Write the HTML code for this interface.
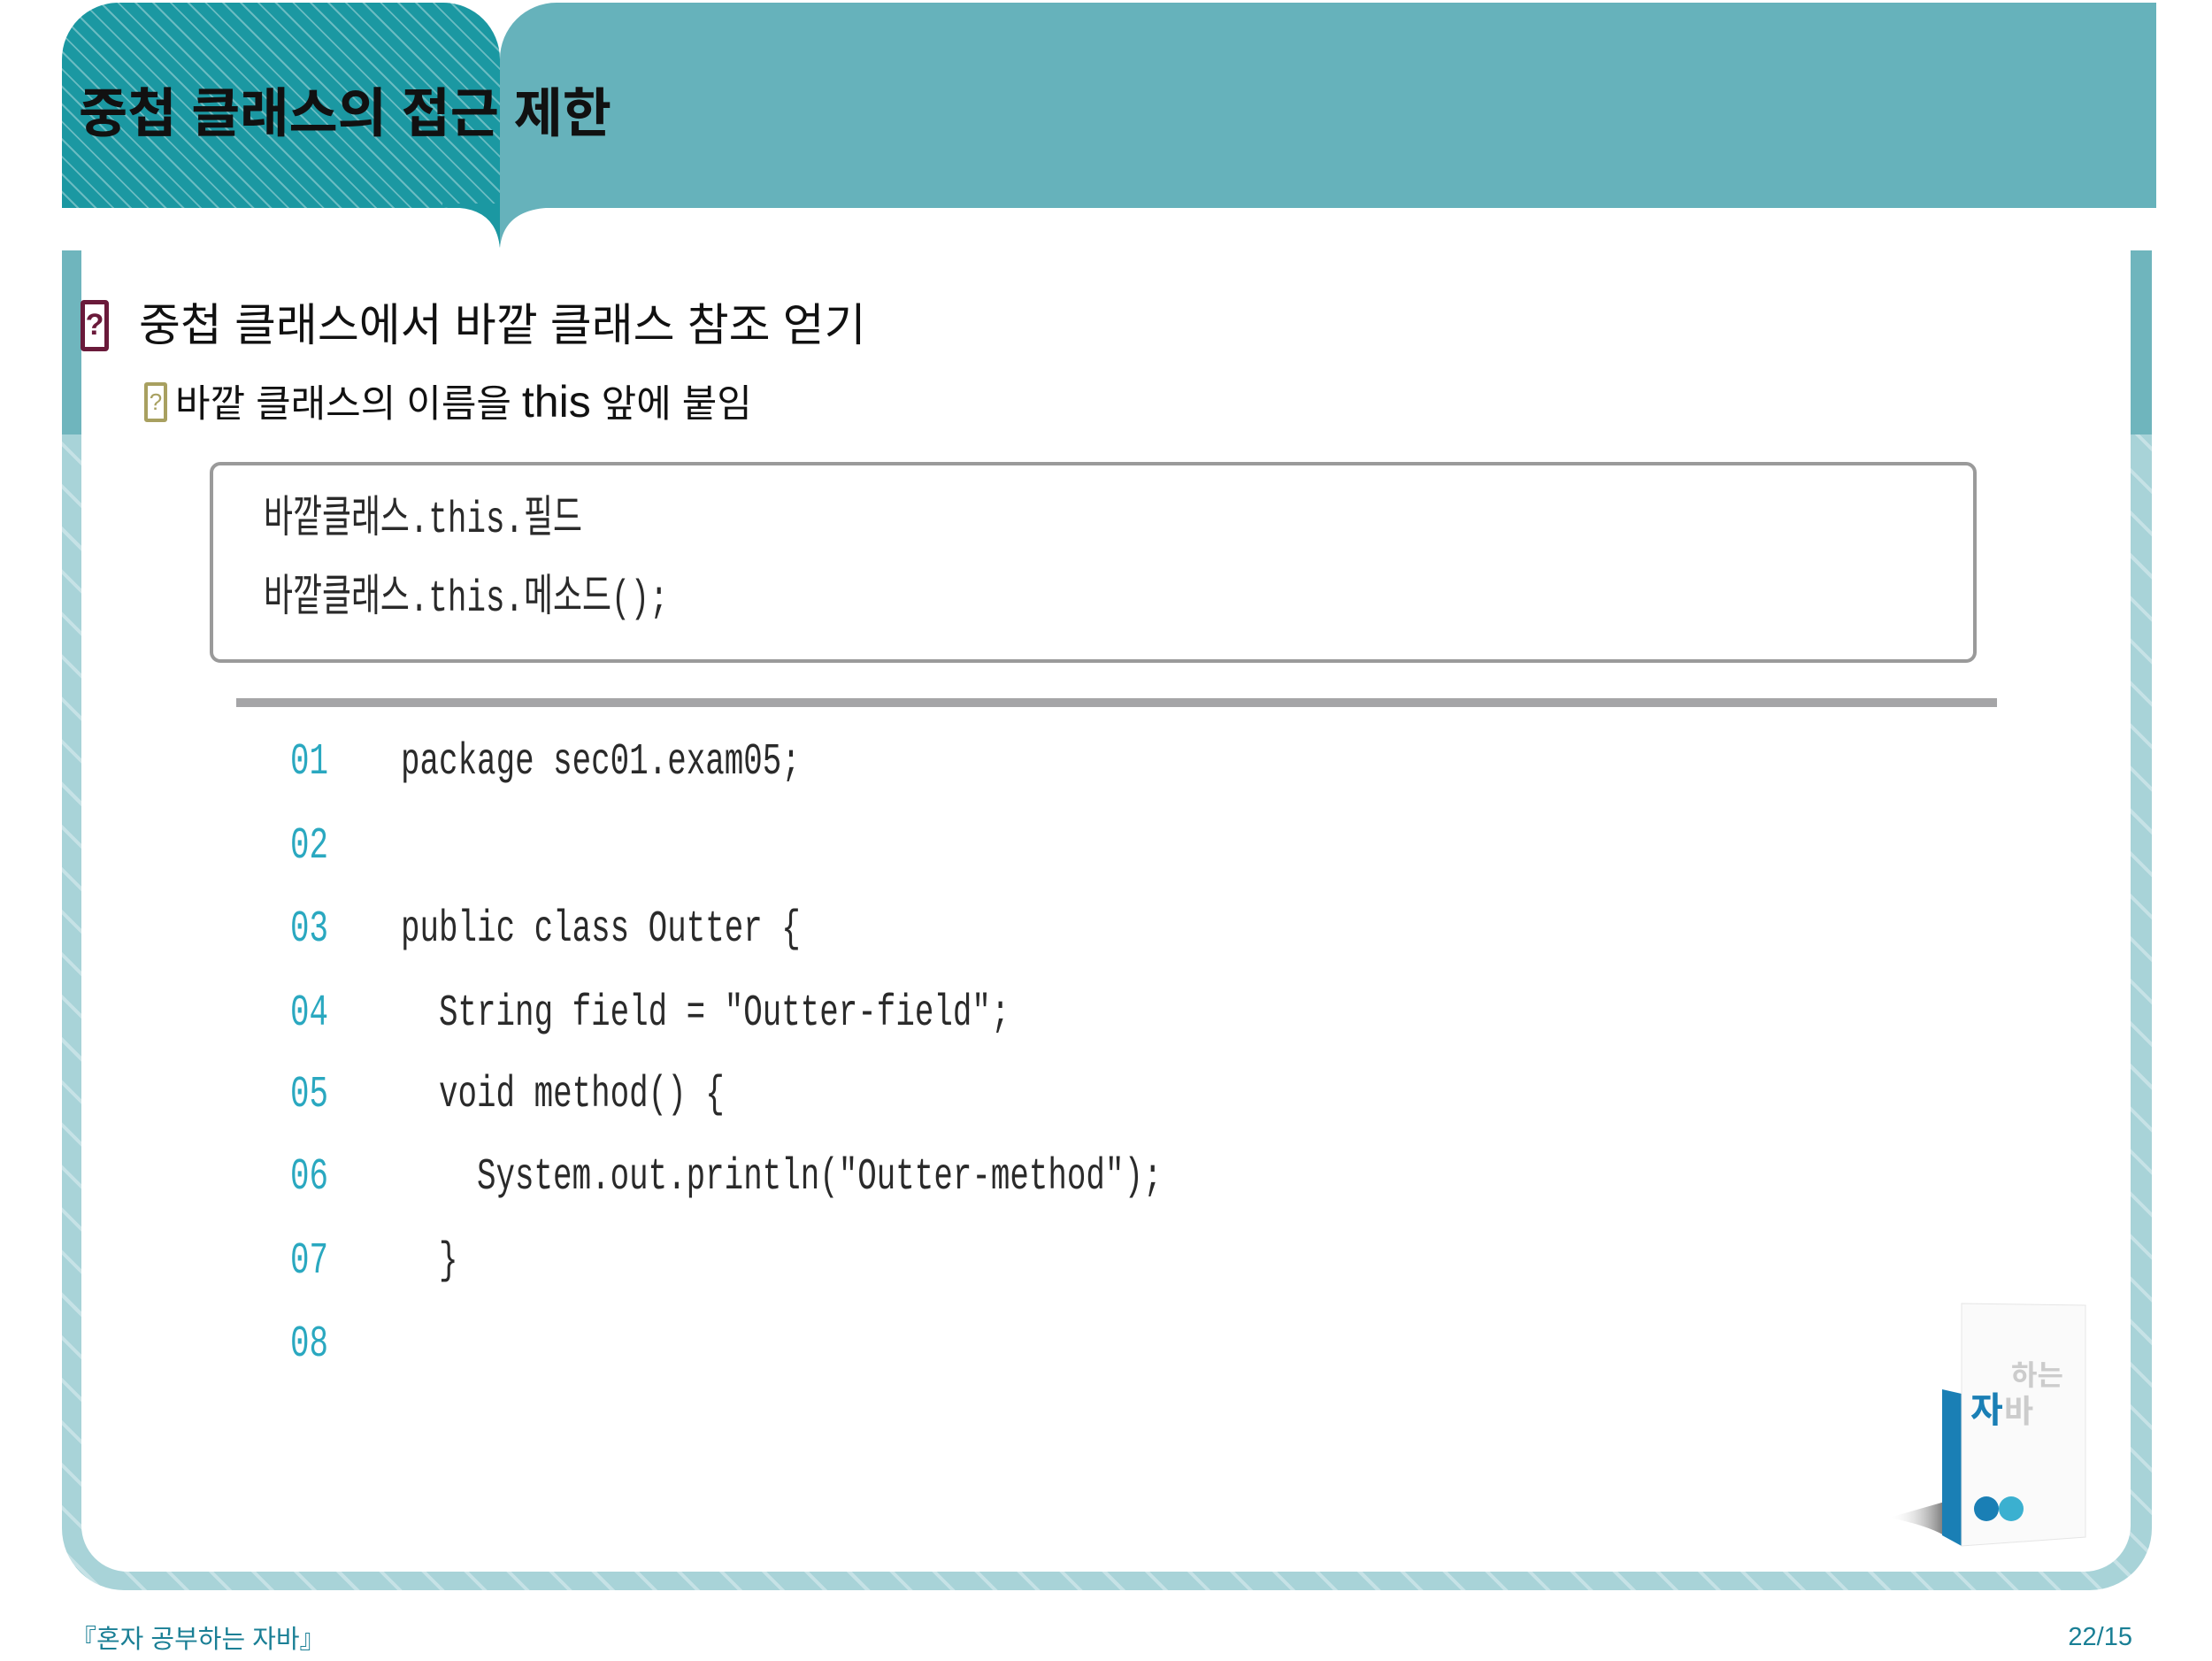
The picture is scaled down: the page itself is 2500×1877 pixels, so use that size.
<!DOCTYPE html>
<html><head><meta charset="utf-8"><style>
*{margin:0;padding:0;box-sizing:border-box}
body{width:2500px;height:1877px;background:#fff;position:relative;overflow:hidden;font-family:"Liberation Sans","Noto Sans CJK KR",sans-serif}
.abs{position:absolute}
.tab{left:70px;top:3px;width:495px;height:232px;border-radius:64px 64px 0 0;background:#1b98a2 repeating-linear-gradient(45deg,transparent 0 12px,rgba(255,255,255,.35) 12px 14px)}
.hdr{left:565px;top:3px;width:1872px;height:232px;border-radius:64px 0 0 0;background:#66b2bb}
.frame{left:70px;top:283px;width:2362px;height:1514px;border-radius:0 0 70px 70px;background:#a8d3d8 repeating-linear-gradient(45deg,transparent 0 30px,rgba(255,255,255,.35) 30px 34px)}
.inner{left:92px;top:283px;width:2316px;height:1493px;background:#fff;border-radius:0 0 52px 52px}
.code{font-family:"Liberation Mono","Noto Sans CJK KR",monospace;font-size:50px;white-space:pre;display:inline-block;transform:scaleX(.717);transform-origin:0 50%;line-height:1}
.ln{color:#2aa8c0}
.tx{color:#2a2a2a}
</style></head><body>
<div class="abs hdr"></div>
<div class="abs tab"></div>
<svg class="abs" style="left:500px;top:230px" width="140" height="55"><path d="M0 0 Q60 0 65 50 Q70 0 140 5 L140 0 Z" fill="#66b2bb"/><path d="M0 0 L65 0 L65 50 Q60 0 0 5Z" fill="#1b98a2"/></svg>
<div class="abs" style="left:89px;top:93px;font-size:60px;font-weight:bold;color:#111;line-height:72px">중첩 클래스의 접근 제한</div>
<div class="abs frame"></div>
<div class="abs" style="left:70px;top:283px;width:22px;height:208px;background:#6fb5bd"></div>
<div class="abs" style="left:2408px;top:283px;width:24px;height:208px;background:#6fb5bd"></div>
<div class="abs inner"></div>

<div class="abs" style="left:91px;top:339px;width:32px;height:58px;border:5px solid #6a1a3a;border-radius:4px;color:#6a1a3a;font-size:34px;font-weight:bold;text-align:center;line-height:46px">?</div>
<div class="abs" style="left:157px;top:336px;font-size:51px;color:#111;line-height:64px">중첩 클래스에서 바깥 클래스 참조 얻기</div>
<div class="abs" style="left:163px;top:432px;width:26px;height:45px;border:4px solid #a8a060;border-radius:3px;color:#a8a060;font-size:26px;text-align:center;line-height:36px">?</div>
<div class="abs" style="left:198px;top:427px;font-size:43px;color:#111;line-height:54px">바깥 클래스의 이름을 <span style="font-size:50px">this</span> 앞에 붙임</div>

<div class="abs" style="left:237px;top:522px;width:1997px;height:227px;border:4px solid #9a9a9a;border-radius:12px"></div>
<div class="abs" style="left:298px;top:564px;height:50px"><span class="code tx">바깥클래스.this.필드</span></div>
<div class="abs" style="left:298px;top:653px;height:50px"><span class="code tx">바깥클래스.this.메소드();</span></div>
<div class="abs" style="left:267px;top:789px;width:1990px;height:10px;background:#a5a5a7"></div>

<div class="abs" style="left:328px;top:837px"><span class="code ln">01</span></div>
<div class="abs" style="left:328px;top:932px"><span class="code ln">02</span></div>
<div class="abs" style="left:328px;top:1026px"><span class="code ln">03</span></div>
<div class="abs" style="left:328px;top:1121px"><span class="code ln">04</span></div>
<div class="abs" style="left:328px;top:1213px"><span class="code ln">05</span></div>
<div class="abs" style="left:328px;top:1306px"><span class="code ln">06</span></div>
<div class="abs" style="left:328px;top:1401px"><span class="code ln">07</span></div>
<div class="abs" style="left:328px;top:1495px"><span class="code ln">08</span></div>
<div class="abs" style="left:453px;top:837px"><span class="code tx">package sec01.exam05;</span></div>
<div class="abs" style="left:453px;top:1026px"><span class="code tx">public class Outter {</span></div>
<div class="abs" style="left:496px;top:1121px"><span class="code tx">String field = "Outter-field";</span></div>
<div class="abs" style="left:496px;top:1213px"><span class="code tx">void method() {</span></div>
<div class="abs" style="left:539px;top:1306px"><span class="code tx">System.out.println("Outter-method");</span></div>
<div class="abs" style="left:496px;top:1401px"><span class="code tx">}</span></div>

<svg class="abs" style="left:2125px;top:1465px" width="240" height="290">
<defs><linearGradient id="sh" x1="0" x2="1"><stop offset="0" stop-color="#fff" stop-opacity="0"/><stop offset="1" stop-color="#555"/></linearGradient></defs>
<path d="M10 250 Q60 260 80 275 L80 230 Z" fill="url(#sh)"/>
<polygon points="70,105 92,110 92,282 70,270" fill="#1a7fb5"/>
<polygon points="92,110 92,8 232,10 232,272 92,282" fill="#fafafa" stroke="#e5e5e5"/>
<text x="102" y="142" font-size="40" font-weight="bold" fill="#1a7fb5" font-family="Noto Sans CJK KR,sans-serif">자</text>
<text x="140" y="142" font-size="36" font-weight="bold" fill="#ccc" font-family="Noto Sans CJK KR,sans-serif">바</text>
<text x="148" y="100" font-size="32" font-weight="bold" fill="#ccc" font-family="Noto Sans CJK KR,sans-serif">하는</text>
<circle cx="120" cy="240" r="14" fill="#1a7fb5"/><circle cx="148" cy="240" r="14" fill="#3bb0d0"/>
</svg>

<div class="abs" style="left:80px;top:1835px;font-size:29px;color:#1a7f95;line-height:36px">『혼자 공부하는 자바』</div>
<div class="abs" style="right:90px;top:1832px;font-size:29px;color:#1a7f95;line-height:36px">22/15</div>
</body></html>
